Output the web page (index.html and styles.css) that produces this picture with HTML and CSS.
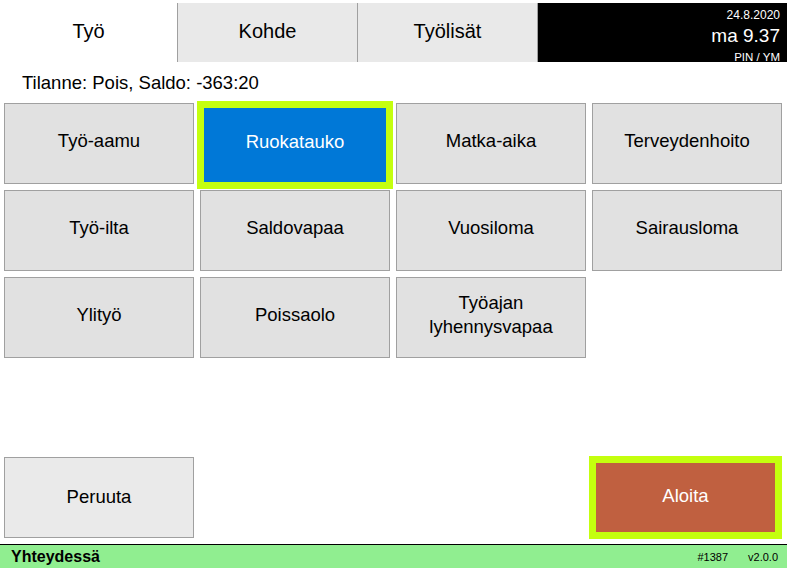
FILE: index.html
```html
<!DOCTYPE html>
<html lang="fi">
<head>
    <meta charset="UTF-8">
    <meta name="viewport" content="width=device-width, initial-scale=1.0">
    <title>Leimaus</title>
    <link rel="stylesheet" href="styles.css">
</head>
<body>
    <div class="header">
        <div class="tab active">Työ</div>
        <div class="tab">Kohde</div>
        <div class="tab">Työlisät</div>
        <div class="clock">
            <div class="date">24.8.2020</div>
            <div class="time">ma 9.37</div>
            <div class="user">PIN / YM</div>
        </div>
    </div>
    <div class="status">Tilanne: Pois, Saldo: -363:20</div>
    <div class="grid">
        <button class="btn">Työ-aamu</button>
        <button class="btn selected">Ruokatauko</button>
        <button class="btn">Matka-aika</button>
        <button class="btn">Terveydenhoito</button>
        <button class="btn">Työ-ilta</button>
        <button class="btn">Saldovapaa</button>
        <button class="btn">Vuosiloma</button>
        <button class="btn">Sairausloma</button>
        <button class="btn">Ylityö</button>
        <button class="btn">Poissaolo</button>
        <button class="btn">Työajan<br>lyhennysvapaa</button>
    </div>
    <div class="actions">
        <button class="btn cancel">Peruuta</button>
        <button class="btn start">Aloita</button>
    </div>
    <div class="footer">
        <span class="conn">Yhteydessä</span>
        <span class="build">#1387</span>
        <span class="version">v2.0.0</span>
    </div>
</body>
</html>
```

FILE: styles.css
```css
html, body { margin: 0; padding: 0; }
body {
    font-family: 'Liberation Sans', Arial, sans-serif;
    width: 787px;
    height: 568px;
    display: flex;
    flex-direction: column;
    background: #fff;
    color: #000;
    overflow: hidden;
}
.header { display: flex; height: 59px; margin-top: 3px; }
.tab {
    display: flex;
    align-items: center;
    justify-content: center;
    font-size: 20px;
    background: #e9e9e9;
    border-left: 1px solid #a0a0a0;
    width: 179px;
    padding-bottom: 2px;
}
.tab.active { background: #fff; border-left: none; width: 177px; }
.clock {
    flex: 1;
    background: #000;
    color: #fff;
    text-align: right;
    padding: 5px 7px 0 0;
    border-left: 1px solid #a0a0a0;
}
.clock .date { font-size: 12px; line-height: 14px; }
.clock .time { font-size: 19px; line-height: 28px; }
.clock .user { font-size: 11.5px; line-height: 15px; }
.status { font-size: 18.5px; height: 41px; line-height: 41px; padding-left: 22px; }
.grid {
    display: grid;
    grid-template-columns: repeat(4, 190px);
    grid-auto-rows: 81px;
    gap: 6px;
    padding-left: 4px;
}
.btn {
    font-family: inherit;
    font-size: 18.5px;
    line-height: 24px;
    color: #000;
    background: #e1e1e1;
    border: 1px solid #a0a0a0;
    padding: 0 0 5px 0;
    margin: 0;
}
.btn.selected {
    background: #0078d7;
    color: #fff;
    border: 7px solid #c4ff0e;
    margin: -2px -3px -5px -3px;
    padding-bottom: 6px;
}
.actions {
    margin-top: auto;
    display: flex;
    justify-content: space-between;
    align-items: flex-start;
    padding: 0 5px 6px 4px;
}
.cancel { width: 190px; height: 81px; background: #eaeaea; padding-bottom: 2px; }
.start {
    width: 193px;
    height: 83px;
    margin: -1px 0 -2px 0;
    background: #c06040;
    color: #fff;
    border: 7px solid #c4ff0e;
    padding-bottom: 3px;
}
.footer {
    height: 23px;
    border-top: 1px solid #000;
    background: #90ee90;
    display: flex;
    align-items: center;
    padding: 0 9px 0 11px;
    font-size: 11px;
}
.conn { font-weight: bold; font-size: 16px; flex: 1; }
.version { margin-left: 20px; }
```
